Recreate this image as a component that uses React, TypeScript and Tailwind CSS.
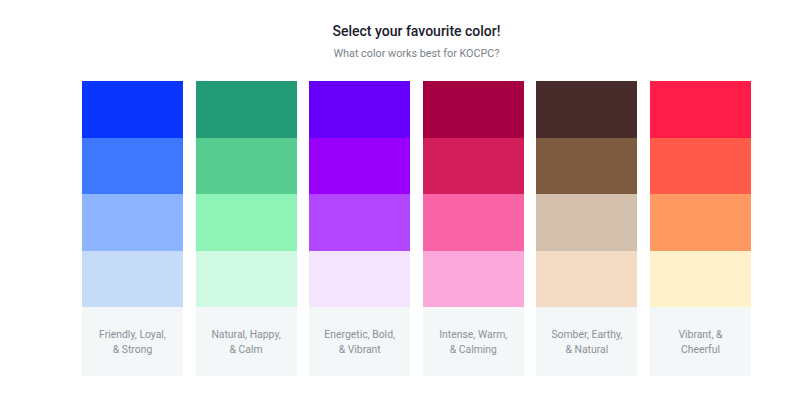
const palettes = [
  { colors: ['#0a35ff', '#3d78ff', '#8cb4ff', '#c6dbf8'], label: ['Friendly, Loyal,', '& Strong'] },
  { colors: ['#229a76', '#56cc91', '#8ff3b8', '#d0f9e3'], label: ['Natural, Happy,', '& Calm'] },
  { colors: ['#6600fb', '#9800fb', '#b247ff', '#f4e5fd'], label: ['Energetic, Bold,', '& Vibrant'] },
  { colors: ['#a70042', '#d31e5c', '#f864a6', '#faa9da'], label: ['Intense, Warm,', '& Calming'] },
  { colors: ['#482b2b', '#7c5b3f', '#d3c0ac', '#f3dbc3'], label: ['Somber, Earthy,', '& Natural'] },
  { colors: ['#ff1c48', '#ff5a4a', '#ff9962', '#fff1c9'], label: ['Vibrant, &', 'Cheerful'] },
];

export default function App() {
  return (
    <div className="w-[800px] h-[411px] bg-white font-['Roboto','Inter',sans-serif]">
      <div className="w-[669px] ml-[82px] pt-[22px]">
        <h1 className="text-[14px] leading-[18px] font-medium text-[#1a202c] text-center">
          Select your favourite color!
        </h1>
        <p className="mt-[7px] text-[10.8px] leading-[14px] text-[#7a7f87] text-center">
          What color works best for KOCPC?
        </p>

        <div className="mt-[20px] grid grid-cols-6 gap-x-[12.6px]">
          {palettes.map((p, i) => (
            <div key={i} className="flex flex-col">
              {p.colors.map((c, j) => (
                <div key={j} className="h-[56.5px]" style={{ backgroundColor: c }} />
              ))}
              <div className="h-[69px] bg-[#f4f7f8] flex flex-col items-center justify-center text-[10.4px] leading-[15px] text-[#8b9097] text-center">
                <span>{p.label[0]}</span>
                <span>{p.label[1]}</span>
              </div>
            </div>
          ))}
        </div>
      </div>
    </div>
  );
}
